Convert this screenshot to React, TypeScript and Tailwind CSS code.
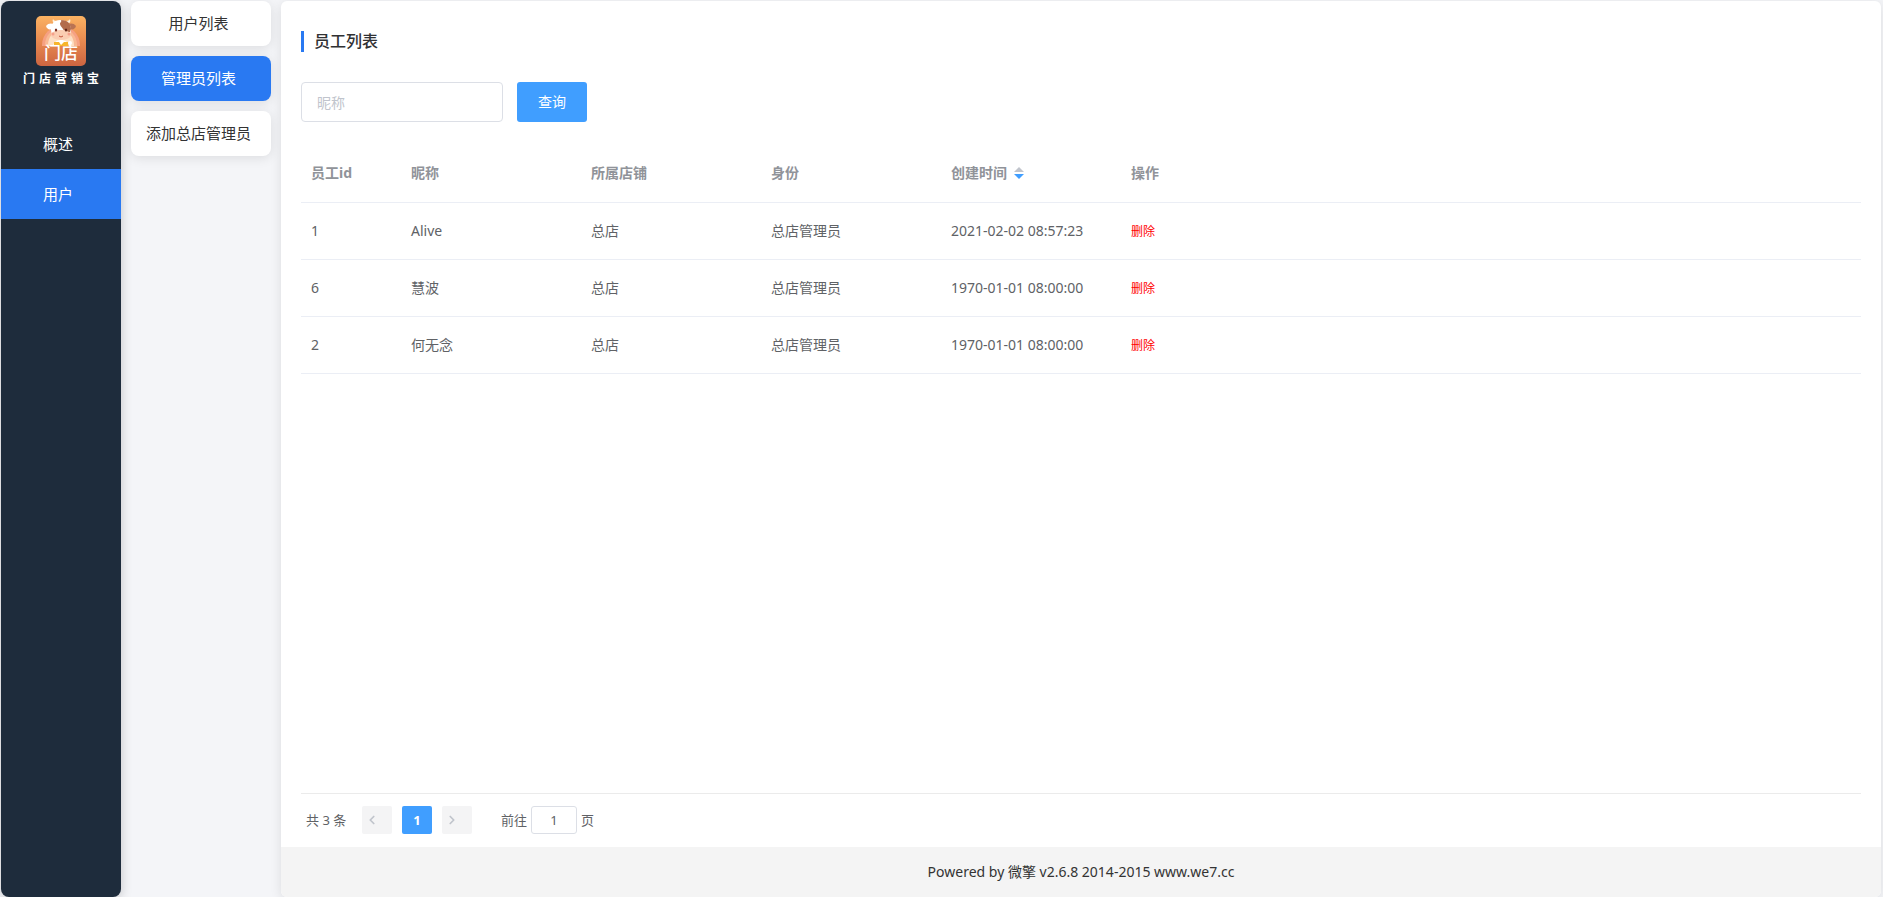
import { ChevronLeft, ChevronRight } from 'lucide-react';
import clsx from 'clsx';

const NAV = [
  { label: '概述', active: false },
  { label: '用户', active: true },
];

const SUB_NAV = [
  { label: '用户列表', active: false },
  { label: '管理员列表', active: true },
  { label: '添加总店管理员', active: false },
];

const STAFF = [
  { id: 1, name: 'Alive', store: '总店', role: '总店管理员', createdAt: '2021-02-02 08:57:23' },
  { id: 6, name: '慧波', store: '总店', role: '总店管理员', createdAt: '1970-01-01 08:00:00' },
  { id: 2, name: '何无念', store: '总店', role: '总店管理员', createdAt: '1970-01-01 08:00:00' },
];

function Logo() {
  return (
    <svg viewBox="0 0 50 50" className="h-[50px] w-[50px]" aria-hidden="true">
      <defs>
        <linearGradient id="logo-bg" x1="0" y1="0" x2="0" y2="1">
          <stop offset="0" stopColor="#fbb262" />
          <stop offset="0.5" stopColor="#e88a50" />
          <stop offset="1" stopColor="#cd6541" />
        </linearGradient>
        <clipPath id="logo-top">
          <rect width="50" height="30" />
        </clipPath>
      </defs>
      <rect width="50" height="50" rx="5" fill="url(#logo-bg)" />
      <g clipPath="url(#logo-top)">
        <ellipse cx="25" cy="29" rx="19" ry="19" fill="#f6a183" />
        <ellipse cx="25" cy="29" rx="16" ry="17" fill="#f9b994" />
        <ellipse cx="25" cy="29" rx="13" ry="15" fill="#fde0c4" />
        <path d="M17 30c1-4 4-6 8-6s7 2 8 6z" fill="#fff" />
        <path d="M18 26l5 0 2 3 3-3 4 0 1 4H18z" fill="#f7b52c" />
        <circle cx="34" cy="27" r="2" fill="#fff" />
      </g>
      {/* horns, ears, face, patch */}
      <path d="M17 3c-1 2 0 4 2 5l3-3c-2 0-4 0-5-2zM34 3c1 2 0 4-2 5l-3-3c2 0 4 0 5-2z" fill="#fff3df" />
      <path d="M10 10c2-3 5-3 8-2l-2 5c-3 1-5 0-6-3z" fill="#fff" />
      <path d="M40 10c-2-3-5-3-8-2l2 5c3 1 5 0 6-3z" fill="#b97353" />
      <path d="M24 4c-6 0-9 4-9 10l1 5h18l1-5c0-6-4-10-11-10z" fill="#fff" />
      <path d="M25 4c7 0 10 4 10 9l-1 3c-3 1-6-1-7-3-1-2-3-3-3-5 0-2 2-2 1-4z" fill="#b26c4d" />
      <ellipse cx="25" cy="19" rx="10" ry="5" fill="#fbcdb2" />
      <ellipse cx="20" cy="14" rx="1.2" ry="1.6" fill="#7b2f22" />
      <ellipse cx="30" cy="14" rx="1.2" ry="1.6" fill="#5e2419" />
      <circle cx="17" cy="18" r="1.5" fill="#f7a08a" />
      <circle cx="33" cy="18" r="1.5" fill="#f7a08a" />
      <path d="M23 20q2 2 4 0" fill="none" stroke="#c4553c" strokeWidth="1" />
      <text
        x="25"
        y="43"
        textAnchor="middle"
        fontSize="17"
        fontWeight="500"
        fill="#fff"
        className="font-['Noto_Sans_CJK_SC',sans-serif]"
      >
        门店
      </text>
    </svg>
  );
}

function Sidebar() {
  return (
    <aside className="flex w-[120px] shrink-0 flex-col rounded-lg bg-[#1e2c3c] text-white shadow-[0_2px_12px_rgba(0,0,0,0.2)]">
      <div className="flex flex-col items-center pt-[15px]">
        <Logo />
        <p className="mt-[3px] pl-1 text-xs leading-5 font-bold tracking-[4px]">门店营销宝</p>
      </div>
      <nav className="mt-[30px]">
        {NAV.map((item) => (
          <a
            key={item.label}
            href="#"
            className={clsx(
              'flex h-[50px] items-center justify-center pr-[6px] text-[15px]',
              item.active && 'bg-[#2979f2]',
            )}
          >
            {item.label}
          </a>
        ))}
      </nav>
    </aside>
  );
}

function SubNav() {
  return (
    <nav className="flex w-[140px] shrink-0 flex-col gap-[10px]">
      {SUB_NAV.map((item) => (
        <a
          key={item.label}
          href="#"
          className={clsx(
            'flex h-[45px] items-center justify-center rounded-lg pr-[5px] text-[15px] shadow-[0_2px_12px_rgba(0,0,0,0.1)]',
            item.active ? 'bg-[#2979f2] text-white' : 'bg-white text-[#333]',
          )}
        >
          {item.label}
        </a>
      ))}
    </nav>
  );
}

function StaffTable() {
  return (
    <table className="w-full table-fixed border-collapse text-left text-sm text-[#606266]">
      <colgroup>
        <col className="w-[100px]" />
        <col className="w-[180px]" />
        <col className="w-[180px]" />
        <col className="w-[180px]" />
        <col className="w-[180px]" />
        <col />
      </colgroup>
      <thead className="text-[#909399]">
        <tr className="h-[57px] border-b border-[#ebeef5]">
          <th className="px-[10px] font-bold">员工id</th>
          <th className="px-[10px] font-bold">昵称</th>
          <th className="px-[10px] font-bold">所属店铺</th>
          <th className="px-[10px] font-bold">身份</th>
          <th className="px-[10px] font-bold">
            <button className="flex items-center gap-[7px] font-bold">
              创建时间
              <svg viewBox="0 0 10 12" className="h-3 w-[10px]" aria-hidden="true">
                <path d="M5 0l5 5H0z" fill="#c0c4cc" />
                <path d="M0 7h10l-5 5z" fill="#409eff" />
              </svg>
            </button>
          </th>
          <th className="px-[10px] font-bold">操作</th>
        </tr>
      </thead>
      <tbody>
        {STAFF.map((row) => (
          <tr key={row.id} className="h-[57px] border-b border-[#ebeef5]">
            <td className="px-[10px]">{row.id}</td>
            <td className="px-[10px]">{row.name}</td>
            <td className="px-[10px]">{row.store}</td>
            <td className="px-[10px]">{row.role}</td>
            <td className="px-[10px] whitespace-nowrap">{row.createdAt}</td>
            <td className="px-[10px]">
              <button className="text-xs text-[#ff0000]">删除</button>
            </td>
          </tr>
        ))}
      </tbody>
    </table>
  );
}

function Pagination() {
  return (
    <div className="flex h-[54px] items-start border-t border-[#ebebeb] px-[5px] pt-3 text-[13px] leading-7 text-[#606266]">
      <span className="w-14">共 3 条</span>
      <div className="flex gap-[10px]">
        <button
          disabled
          aria-label="上一页"
          className="flex h-7 w-[30px] items-center rounded-xs bg-[#f4f4f5] pl-[3px] text-[#c0c4cc]"
        >
          <ChevronLeft className="h-[14px] w-[14px]" strokeWidth={3} />
        </button>
        <button className="h-7 w-[30px] rounded-xs bg-[#409eff] font-bold text-white">1</button>
        <button
          disabled
          aria-label="下一页"
          className="flex h-7 w-[30px] items-center rounded-xs bg-[#f4f4f5] pl-[3px] text-[#c0c4cc]"
        >
          <ChevronRight className="h-[14px] w-[14px]" strokeWidth={3} />
        </button>
      </div>
      <label className="ml-[29px] flex items-center gap-1">
        前往
        <input
          type="text"
          defaultValue="1"
          className="h-7 w-[46px] rounded-[3px] border border-[#dcdfe6] bg-white text-center"
        />
        页
      </label>
    </div>
  );
}

export default function App() {
  return (
    <div className="flex min-h-screen gap-[10px] bg-[#f4f5f8] pt-px pr-[2px] pl-px font-['Noto_Sans','Noto_Sans_CJK_SC',sans-serif]">
      <Sidebar />
      <SubNav />
      <main className="flex min-w-0 flex-1 flex-col overflow-hidden rounded-md bg-white shadow-[0_2px_12px_rgba(0,0,0,0.1)]">
        <div className="flex flex-1 flex-col px-5 pt-[30px]">
          <h1 className="border-l-3 border-[#2979f2] pl-[10px] text-base leading-[21px] font-medium text-[#303133]">
            员工列表
          </h1>
          <form className="mt-[30px] mb-[23px] flex gap-[14px]" onSubmit={(e) => e.preventDefault()}>
            <input
              type="text"
              placeholder="昵称"
              aria-label="昵称"
              className="h-10 w-[202px] rounded-sm border border-[#dcdfe6] px-[15px] text-sm placeholder:text-[#c0c4cc]"
            />
            <button className="h-10 w-[70px] rounded-[3px] bg-[#409eff] text-sm text-white">查询</button>
          </form>
          <div className="flex-1">
            <StaffTable />
          </div>
          <Pagination />
        </div>
        <footer className="flex h-[50px] items-center justify-center bg-[#f4f4f4] text-sm text-[#333]">
          Powered by 微擎 v2.6.8 2014-2015 www.we7.cc
        </footer>
      </main>
    </div>
  );
}
